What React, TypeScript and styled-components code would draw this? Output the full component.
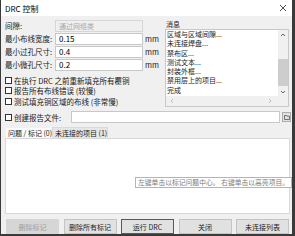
import styled, { createGlobalStyle } from "styled-components";

const Global = createGlobalStyle`
  html, body {
    margin: 0;
    padding: 0;
    background: #3a3a3a;
    width: 295px;
    height: 236px;
    overflow: hidden;
  }
  body {
    font-family: "Noto Sans CJK SC", "Noto Sans", sans-serif;
    font-size: 7.5px;
    color: #1a1a1a;
  }
`;

const Window = styled.div`
  margin-left: 1px;
  width: 291px;
  height: 234px;
  background: #f0f0f0;
  display: flex;
  flex-direction: column;
  overflow: hidden;
`;

const TitleBar = styled.div`
  flex: none;
  height: 16px;
  background: #fff;
  display: flex;
  align-items: center;
  justify-content: space-between;
  padding: 0 5px 0 4px;
  font-size: 8px;
  color: #000;
`;

const Body = styled.div`
  flex: none;
  display: flex;
  flex-direction: column;
  padding: 4px 1px 1px 4px;
`;

const Top = styled.div`
  display: grid;
  grid-template-columns: 156px 124px;
  column-gap: 4px;
`;

const FormGrid = styled.div`
  display: grid;
  grid-template-columns: 50px 88px auto;
  grid-auto-rows: 12px;
  row-gap: 1px;
  align-items: center;
`;

const Label = styled.span`
  white-space: nowrap;
  line-height: 12px;
`;

const Input = styled.div<{ $disabled?: boolean }>`
  height: 12px;
  box-sizing: border-box;
  border: 1px solid ${(p) => (p.$disabled ? "#d6d6d6" : "#c8c8c8")};
  background: ${(p) => (p.$disabled ? "#f0f0f0" : "#fff")};
  color: ${(p) => (p.$disabled ? "#a8a8a8" : "#000")};
  font-size: ${(p) => (p.$disabled ? "7px" : "8px")};
  line-height: 10px;
  padding-left: 3px;
  white-space: nowrap;
`;

const Unit = styled.span`
  padding-left: 2px;
  line-height: 12px;
`;

const Checks = styled.div`
  margin-top: 4px;
  display: flex;
  flex-direction: column;
`;

const CheckRow = styled.label`
  height: 10.5px;
  display: flex;
  align-items: center;
  gap: 2px;
  white-space: nowrap;
`;

const Box = styled.span`
  width: 7px;
  height: 7px;
  box-sizing: border-box;
  border: 1px solid #333;
  background: #fff;
  flex: none;
`;

const Messages = styled.div`
  display: flex;
  flex-direction: column;
`;

const MsgLabel = styled.div`
  height: 9px;
  line-height: 9px;
  font-size: 7px;
  padding-left: 1px;
`;

const ListBox = styled.div`
  height: 78px;
  box-sizing: border-box;
  border: 1px solid #c8c8c8;
  background: #fff;
  display: grid;
  grid-template-columns: 1fr 10px;
  grid-template-rows: 1fr 10px;
`;

const Items = styled.div`
  padding: 0 0 0 1px;
  overflow: hidden;
  font-size: 7px;
  line-height: 9.3px;
  white-space: nowrap;
`;

const VScroll = styled.div`
  background: #f0f0f0;
  display: flex;
  flex-direction: column;
  align-items: center;
`;

const Arrow = styled.div`
  height: 9px;
  width: 100%;
  display: flex;
  align-items: center;
  justify-content: center;
  flex: none;
`;

const Thumb = styled.div`
  margin-top: 20px;
  width: 100%;
  height: 27px;
  background: #cdcdcd;
`;

const Spacer = styled.div`
  flex: 1;
`;

const HScroll = styled.div`
  background: #f0f0f0;
  display: flex;
  align-items: center;
  justify-content: space-between;
  padding: 0 5px 0 3px;
`;

const Corner = styled.div`
  background: #f0f0f0;
`;

const ReportRow = styled.div`
  margin-top: 4px;
  height: 12px;
  display: grid;
  grid-template-columns: 7px 55px 209px 9px;
  column-gap: 2px;
  align-items: center;
`;

const ReportLabel = styled.span`
  white-space: nowrap;
`;

const ReportInput = styled.div`
  height: 12px;
  box-sizing: border-box;
  border: 1px solid #c8c8c8;
  background: #fff;
`;

const FolderButton = styled.div`
  width: 9px;
  height: 10px;
  box-sizing: border-box;
  border: 1px solid #adadad;
  background: #e1e1e1;
  display: flex;
  align-items: center;
  justify-content: center;
`;

const Tabs = styled.div`
  margin-top: 4px;
  height: 11px;
  display: flex;
  align-items: stretch;
`;

const Tab = styled.div<{ $active?: boolean }>`
  padding: 0 2px;
  display: flex;
  align-items: center;
  white-space: nowrap;
  font-size: 7px;
  box-sizing: border-box;
  background: ${(p) => (p.$active ? "#fafafa" : "#e6e6e6")};
  border: 1px solid ${(p) => (p.$active ? "#f0f0f0" : "#d9d9d9")};
  border-bottom: none;
  width: ${(p) => (p.$active ? "47px" : "56px")};
`;

const Panel = styled.div`
  position: relative;
  height: 76px;
  box-sizing: border-box;
  border: 1px solid #d9d9d9;
  background: #fff;
  margin-right: 1px;
`;

const Tip = styled.div`
  position: absolute;
  left: 129px;
  top: 38px;
  height: 11px;
  box-sizing: border-box;
  border: 1px solid #b4b4b4;
  background: #fff;
  color: #7a7a7a;
  font-size: 6.8px;
  line-height: 9px;
  padding: 0 2px;
  white-space: nowrap;
`;

const Buttons = styled.div`
  margin-top: 5px;
  display: grid;
  grid-template-columns: repeat(5, 53px);
  column-gap: 4.5px;
  padding-left: 1px;
`;

const Button = styled.div<{ $disabled?: boolean; $default?: boolean }>`
  height: 15px;
  box-sizing: border-box;
  display: flex;
  align-items: center;
  justify-content: center;
  font-size: 7px;
  white-space: nowrap;
  background: ${(p) => (p.$disabled ? "#d6d6d6" : "#e1e1e1")};
  color: ${(p) => (p.$disabled ? "#a0a0a0" : "#222")};
  border: 1px solid
    ${(p) => (p.$disabled ? "#d6d6d6" : p.$default ? "#5a5a5a" : "#c4c4c4")};
`;

const Chevron = ({ dir }: { dir: "up" | "down" | "left" | "right" }) => {
  const d = {
    up: "M1 4 L3 2 L5 4",
    down: "M1 2 L3 4 L5 2",
    left: "M4 1 L2 3 L4 5",
    right: "M2 1 L4 3 L2 5",
  }[dir];
  return (
    <svg width="6" height="6" viewBox="0 0 6 6">
      <path d={d} fill="none" stroke={dir === "up" || dir === "down" ? "#555" : "#bbb"} strokeWidth="0.9" />
    </svg>
  );
};

const messages = [
  "区域与区域间隙...",
  "未连接焊盘...",
  "禁布区...",
  "测试文本...",
  "封装外框...",
  "禁用层上的项目...",
  "完成",
];

export default function App() {
  return (
    <>
      <Global />
      <Window>
        <TitleBar>
          <span>DRC 控制</span>
          <svg width="8" height="8" viewBox="0 0 8 8">
            <path d="M1 1 L7 7 M7 1 L1 7" stroke="#222" strokeWidth="0.8" />
          </svg>
        </TitleBar>
        <Body>
          <Top>
            <div>
              <FormGrid>
                <Label>间隙:</Label>
                <Input $disabled>通过网络类</Input>
                <span />
                <Label>最小布线宽度:</Label>
                <Input>0.15</Input>
                <Unit>mm</Unit>
                <Label>最小过孔尺寸:</Label>
                <Input>0.4</Input>
                <Unit>mm</Unit>
                <Label>最小微孔尺寸:</Label>
                <Input>0.2</Input>
                <Unit>mm</Unit>
              </FormGrid>
              <Checks>
                <CheckRow>
                  <Box />
                  在执行 DRC 之前重新填充所有覆铜
                </CheckRow>
                <CheckRow>
                  <Box />
                  报告所有布线错误 (较慢)
                </CheckRow>
                <CheckRow>
                  <Box />
                  测试填充铜区域的布线 (非常慢)
                </CheckRow>
              </Checks>
            </div>
            <Messages>
              <MsgLabel>消息</MsgLabel>
              <ListBox>
                <Items>
                  {messages.map((m) => (
                    <div key={m}>{m}</div>
                  ))}
                </Items>
                <VScroll>
                  <Arrow>
                    <Chevron dir="up" />
                  </Arrow>
                  <Thumb />
                  <Spacer />
                  <Arrow>
                    <Chevron dir="down" />
                  </Arrow>
                </VScroll>
                <HScroll>
                  <Chevron dir="left" />
                  <Chevron dir="right" />
                </HScroll>
                <Corner />
              </ListBox>
            </Messages>
          </Top>
          <ReportRow>
            <Box />
            <ReportLabel>创建报告文件:</ReportLabel>
            <ReportInput />
            <FolderButton>
              <svg width="6" height="5" viewBox="0 0 6 5">
                <path d="M0.5 0.5 H2.5 L3 1.2 H5.5 V4.5 H0.5 Z" fill="none" stroke="#444" strokeWidth="0.7" />
              </svg>
            </FolderButton>
          </ReportRow>
          <Tabs>
            <Tab $active>问题 / 标记 (0)</Tab>
            <Tab>未连接的项目 (1)</Tab>
          </Tabs>
          <Panel>
            <Tip>左键单击以标记问题中心。 右键单击以高亮项目。</Tip>
          </Panel>
          <Buttons>
            <Button $disabled>删除标记</Button>
            <Button>删除所有标记</Button>
            <Button $default>运行 DRC</Button>
            <Button>关闭</Button>
            <Button>未连接列表</Button>
          </Buttons>
        </Body>
      </Window>
    </>
  );
}
